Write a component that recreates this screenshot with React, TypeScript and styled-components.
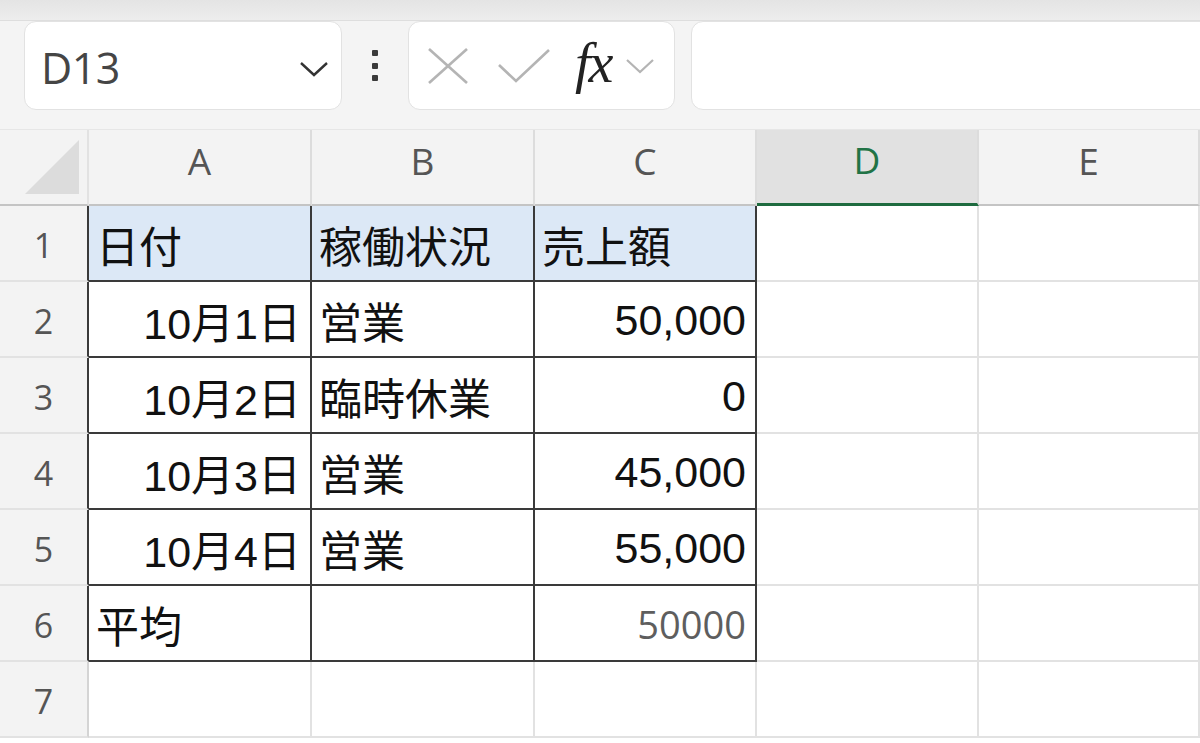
import styled, { createGlobalStyle } from 'styled-components';

const GlobalStyle = createGlobalStyle`
  html, body {
    margin: 0;
    padding: 0;
    background: #ffffff;
    overflow: hidden;
  }
  body {
    font-family: 'Noto Sans', 'Noto Sans CJK JP', sans-serif;
  }
`;

type CellData = {
  text: string;
  right?: boolean;
  fill?: boolean;
  muted?: boolean;
};

const COLUMNS = ['A', 'B', 'C', 'D', 'E'];
const ACTIVE_COLUMN = 'D';

const TABLE: CellData[][] = [
  [
    { text: '日付', fill: true },
    { text: '稼働状況', fill: true },
    { text: '売上額', fill: true },
  ],
  [{ text: '10月1日', right: true }, { text: '営業' }, { text: '50,000', right: true }],
  [{ text: '10月2日', right: true }, { text: '臨時休業' }, { text: '0', right: true }],
  [{ text: '10月3日', right: true }, { text: '営業' }, { text: '45,000', right: true }],
  [{ text: '10月4日', right: true }, { text: '営業' }, { text: '55,000', right: true }],
  [{ text: '平均' }, { text: '' }, { text: '50000', right: true, muted: true }],
];

const ROW_COUNT = 7;

export default function App() {
  return (
    <Page>
      <GlobalStyle />
      <TopStrip />
      <Toolbar>
        <NameBox>
          <NameText>D13</NameText>
          <svg width="30" height="18" viewBox="0 0 30 18">
            <polyline points="2,3 15,15 28,3" fill="none" stroke="#333" strokeWidth="2.4" />
          </svg>
        </NameBox>
        <Dots>
          <Dot />
          <Dot />
          <Dot />
        </Dots>
        <FormulaButtons>
          <svg width="42" height="38" viewBox="0 0 42 38">
            <line x1="2" y1="2" x2="40" y2="36" stroke="#b4b4b4" strokeWidth="2.6" />
            <line x1="40" y1="2" x2="2" y2="36" stroke="#b4b4b4" strokeWidth="2.6" />
          </svg>
          <svg width="54" height="36" viewBox="0 0 54 36">
            <polyline points="2,17 19,33 52,2" fill="none" stroke="#b4b4b4" strokeWidth="2.6" />
          </svg>
          <FxLabel>fx</FxLabel>
          <svg width="30" height="16" viewBox="0 0 30 16">
            <polyline points="2,2 15,14 28,2" fill="none" stroke="#b4b4b4" strokeWidth="2.2" />
          </svg>
        </FormulaButtons>
        <FormulaBar />
      </Toolbar>

      <Sheet>
        <Corner>
          <svg width="54" height="54" viewBox="0 0 54 54">
            <polygon points="54,0 54,54 0,54" fill="#dcdcdc" />
          </svg>
        </Corner>
        {COLUMNS.map((col) => (
          <ColHead key={col} $active={col === ACTIVE_COLUMN}>
            {col}
          </ColHead>
        ))}

        {Array.from({ length: ROW_COUNT }, (_, r) => {
          const data = TABLE[r];
          return [
            <RowHead key={`h${r}`} $boxed={!!data}>
              {r + 1}
            </RowHead>,
            ...COLUMNS.map((col, c) => {
              const cell = data ? data[c] : undefined;
              return (
                <Cell
                  key={`${r}-${col}`}
                  $boxed={!!cell}
                  $fill={!!cell?.fill}
                  $right={!!cell?.right}
                >
                  {cell && (cell.muted ? <Muted>{cell.text}</Muted> : cell.text)}
                </Cell>
              );
            }),
          ];
        })}
      </Sheet>
    </Page>
  );
}

const Page = styled.div`
  width: 1200px;
  height: 743px;
  overflow: hidden;
  background: #ffffff;
`;

const TopStrip = styled.div`
  height: 20px;
  background: linear-gradient(#e4e4e4, #ededed);
  border-bottom: 1px solid #dedede;
`;

const Toolbar = styled.div`
  display: flex;
  align-items: flex-start;
  height: 108px;
  padding-left: 24px;
  background: #f4f4f4;
  border-bottom: 1px solid #e6e6e6;
`;

const Box = styled.div`
  box-sizing: border-box;
  height: 89px;
  background: #ffffff;
  border: 1px solid #e2e2e2;
  border-radius: 12px;
`;

const NameBox = styled(Box)`
  width: 318px;
  display: flex;
  align-items: center;
  justify-content: space-between;
  padding: 4px 12px 0 16px;

  & > svg {
    margin-top: 2px;
  }
`;

const NameText = styled.span`
  font-family: 'Open Sans', sans-serif;
  font-size: 43px;
  color: #454545;
  letter-spacing: -0.5px;
`;

const Dots = styled.div`
  width: 66px;
  height: 89px;
  display: flex;
  flex-direction: column;
  align-items: center;
  justify-content: center;
  gap: 6.5px;
`;

const Dot = styled.span`
  width: 6px;
  height: 6px;
  border-radius: 1px;
  background: #3a3a3a;
`;

const FormulaButtons = styled(Box)`
  width: 267px;
  display: flex;
  align-items: center;
  padding-left: 18px;

  & > svg:nth-child(1) {
    margin-right: 28px;
  }
  & > svg:nth-child(2) {
    margin-right: 24px;
  }
`;

const FxLabel = styled.span`
  font-family: 'Liberation Serif', serif;
  font-style: italic;
  font-size: 56px;
  line-height: 1;
  color: #222;
  letter-spacing: -2px;
  margin: -6px 14px 0 0;
`;

const FormulaBar = styled(Box)`
  flex: 1;
  margin: 0 -20px 0 16px;
`;

const Sheet = styled.div`
  display: grid;
  grid-template-columns: 89px 223px 223px 222px 222px 1fr;
  grid-auto-rows: 76px;
`;

const Corner = styled.div`
  box-sizing: border-box;
  display: flex;
  align-items: flex-end;
  justify-content: flex-end;
  padding: 0 8px 10px 0;
  background: #f3f3f3;
  border-right: 2px solid #e2e2e2;
  border-bottom: 2px solid #c4c4c4;
`;

const ColHead = styled.div<{ $active: boolean }>`
  box-sizing: border-box;
  display: flex;
  align-items: center;
  justify-content: center;
  padding-bottom: 14px;
  font-family: 'Open Sans', sans-serif;
  font-size: 37px;
  color: ${(p) => (p.$active ? '#217346' : '#555555')};
  background: ${(p) => (p.$active ? '#e1e1e1' : '#f3f3f3')};
  border-right: 2px solid #dcdcdc;
  border-bottom: ${(p) => (p.$active ? '3px solid #1e6b3f' : '2px solid #c4c4c4')};
`;

const RowHead = styled.div<{ $boxed: boolean }>`
  box-sizing: border-box;
  display: flex;
  align-items: center;
  justify-content: center;
  padding-top: 4px;
  font-family: 'Open Sans', sans-serif;
  font-size: 34px;
  color: #555555;
  background: #f3f3f3;
  border-right: 2px solid ${(p) => (p.$boxed ? '#3a3a3a' : '#d4d4d4')};
  border-bottom: 2px solid #e2e2e2;
`;

const Cell = styled.div<{ $boxed: boolean; $fill: boolean; $right: boolean }>`
  box-sizing: border-box;
  display: flex;
  align-items: center;
  justify-content: ${(p) => (p.$right ? 'flex-end' : 'flex-start')};
  padding: 2px 9px 0 7px;
  font-family: 'Liberation Sans', 'Noto Sans CJK JP', sans-serif;
  font-size: 43px;
  color: #111111;
  white-space: nowrap;
  overflow: hidden;
  background: ${(p) => (p.$fill ? '#dce8f6' : '#ffffff')};
  border-right: 2px solid ${(p) => (p.$boxed ? '#3a3a3a' : '#e2e2e2')};
  border-bottom: 2px solid ${(p) => (p.$boxed ? '#3a3a3a' : '#e2e2e2')};
`;

const Muted = styled.span`
  font-family: 'Open Sans', sans-serif;
  font-size: 38px;
  color: #5e5e5e;
`;
